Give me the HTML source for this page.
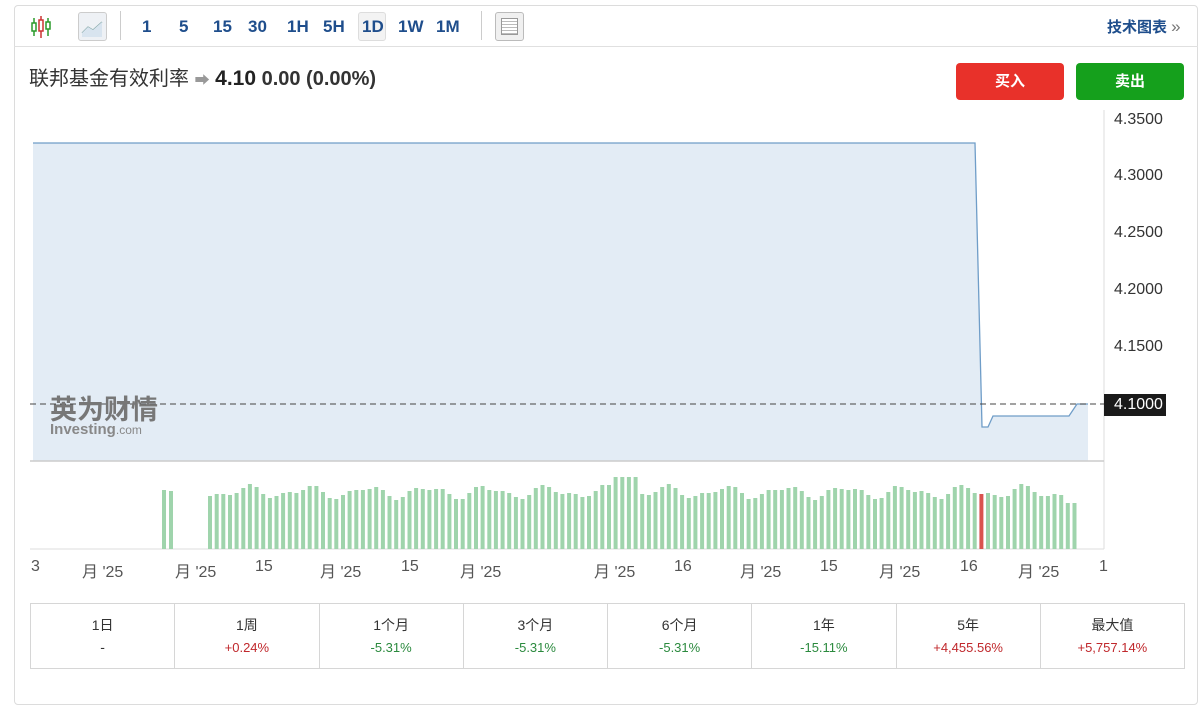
<!DOCTYPE html>
<html><head><meta charset="utf-8"><style>
*{margin:0;padding:0;box-sizing:border-box}
body{width:1200px;height:673px;background:#fff;font-family:"Liberation Sans","Noto Sans CJK SC",sans-serif;position:relative;overflow:hidden}
.box{position:absolute;left:14px;top:5px;width:1184px;height:700px;border:1px solid #dcdcdc;border-radius:4px}
.tb{position:absolute;left:14px;top:5px;width:1184px;height:42px;border-bottom:1px solid #e0e0e0}
.tb span{position:absolute;top:12px;font-size:17px;font-weight:bold;color:#1f4e8c}
.sep{position:absolute;top:12px;width:1px;height:29px;background:#ccc}
.title{position:absolute;left:29px;top:62px;font-size:20px;color:#333}
.btn{position:absolute;top:63px;width:108px;height:37px;border-radius:4px;color:#fff;font-weight:bold;font-size:15px;text-align:center;line-height:37px}
.yl{position:absolute;left:1114px;font-size:16px;color:#333}
.xl{position:absolute;top:558px;font-size:16px;color:#555}
table{position:absolute;left:30px;top:603px;width:1155px;height:66px;border-collapse:collapse}
td{border:1px solid #d6d6d6;text-align:center;font-size:14px;color:#333;line-height:22px;width:144px}
.r{color:#c0282c;font-size:13px}.g{color:#2b8a3e;font-size:13px}
</style></head><body>
<div class="box"></div>
<div class="tb">
<svg style="position:absolute;left:16px;top:9px" width="24" height="26"><g stroke-width="1.5"><line x1="4" y1="4" x2="4" y2="22" stroke="#2a9a2a"/><rect x="2" y="9" width="4" height="8" fill="#fff" stroke="#2a9a2a"/><line x1="11" y1="2" x2="11" y2="24" stroke="#c33"/><rect x="9" y="6" width="4" height="11" fill="#fff" stroke="#c33"/><line x1="18" y1="4" x2="18" y2="22" stroke="#2a9a2a"/><rect x="16" y="8" width="4" height="7" fill="#fff" stroke="#2a9a2a"/></g></svg>
<div style="position:absolute;left:64px;top:7px;width:29px;height:29px;border:1px solid #ccc;border-radius:3px;background:#eef1f5"><svg width="27" height="27"><polyline points="3,20 9,14 14,17 23,9" fill="none" stroke="#8aa" stroke-width="1.2"/><polygon points="3,20 9,14 14,17 23,9 23,24 3,24" fill="#d8e4ef"/></svg></div>
<div class="sep" style="left:106px;top:6px"></div>
<span style="left:128px">1</span><span style="left:165px">5</span><span style="left:199px">15</span><span style="left:234px">30</span><span style="left:273px">1H</span><span style="left:309px">5H</span>
<div style="position:absolute;left:344px;top:7px;width:28px;height:29px;border:1px solid #ddd;border-radius:3px;background:#f3f3f3"></div><span style="left:348px">1D</span>
<span style="left:384px">1W</span><span style="left:422px">1M</span>
<div class="sep" style="left:467px;top:6px"></div>
<div style="position:absolute;left:481px;top:7px;width:29px;height:29px;border:1px solid #bbb;border-radius:3px;background:#f0f0f0"><div style="margin:5px;height:17px;border:1px solid #999;background:repeating-linear-gradient(#fff 0 2px,#bbb 2px 3px)"></div></div>
<span style="left:1093px;top:11px;font-size:15px">技术图表 <span style="position:static;color:#777;font-weight:normal">»</span></span>
</div>
<div class="title">联邦基金有效利率 <span style="color:#999;font-size:15px">➡</span> <b style="color:#222;font-size:21px">4.10</b> <span style="font-weight:bold;color:#333">0.00 (0.00%)</span></div>
<div class="btn" style="left:956px;background:#e8312a">买入</div>
<div class="btn" style="left:1076px;background:#15a01c">卖出</div>
<svg style="position:absolute;left:0;top:0" width="1200" height="600">
<line x1="1104" y1="110" x2="1104" y2="549" stroke="#ddd"/>
<polygon points="33,143 975,143 982,427 988,427 993,416 1069,416 1077,404 1088,404 1088,461 33,461" fill="#e3ecf5"/>
<polyline points="33,143 975,143 982,427 988,427 993,416 1069,416 1077,404 1088,404" fill="none" stroke="#6f9dc8" stroke-width="1.3"/>
<line x1="30" y1="461" x2="1104" y2="461" stroke="#ccc" stroke-width="1.5"/>
<line x1="30" y1="549" x2="1104" y2="549" stroke="#ddd"/>
<line x1="30" y1="404" x2="1104" y2="404" stroke="#444" stroke-dasharray="6,4"/>
<g id="bars" fill="#9fd4ac"></g>
<text x="50" y="419" font-size="27" font-weight="bold" fill="#777" font-family="Noto Sans CJK SC,sans-serif">英为财情</text>
<text x="50" y="434" font-size="15" font-weight="bold" fill="#888">Investing<tspan font-weight="normal" font-size="12">.com</tspan></text>
</svg>
<div style="position:absolute;left:1104px;top:394px;width:62px;height:22px;background:#1a1a1a;color:#fff;font-size:16px;line-height:22px;padding-left:10px">4.1000</div>
<div class="yl" style="top:111px">4.3500</div><div class="yl" style="top:167px">4.3000</div><div class="yl" style="top:224px">4.2500</div><div class="yl" style="top:281px">4.2000</div><div class="yl" style="top:338px">4.1500</div>
<div class="xl" style="left:31px">3</div><div class="xl" style="left:82px">月 '25</div><div class="xl" style="left:175px">月 '25</div><div class="xl" style="left:255px">15</div><div class="xl" style="left:320px">月 '25</div><div class="xl" style="left:401px">15</div><div class="xl" style="left:460px">月 '25</div><div class="xl" style="left:594px">月 '25</div><div class="xl" style="left:674px">16</div><div class="xl" style="left:740px">月 '25</div><div class="xl" style="left:820px">15</div><div class="xl" style="left:879px">月 '25</div><div class="xl" style="left:960px">16</div><div class="xl" style="left:1018px">月 '25</div><div class="xl" style="left:1099px">1</div>
<table><tr><td>1日<br>-</td><td>1周<br><span class="r">+0.24%</span></td><td>1个月<br><span class="g">-5.31%</span></td><td>3个月<br><span class="g">-5.31%</span></td><td>6个月<br><span class="g">-5.31%</span></td><td>1年<br><span class="g">-15.11%</span></td><td>5年<br><span class="r">+4,455.56%</span></td><td>最大值<br><span class="r">+5,757.14%</span></td></tr></table>
<script>
var g=document.getElementById('bars'),s='';
function b(x,t,c){s+='<rect x="'+x.toFixed(1)+'" y="'+t+'" width="4" height="'+(549-t)+'"'+(c?' fill="#d9534f"':'')+'/>';}
b(162,490);b(169,491);
var n=0;for(var x=208;x<1076;x+=6.65){n++;var t=492+Math.round(5*Math.sin(n*0.7)+3*Math.cos(n*1.3));if(x>610&&x<640)t=477;if(x>1060)t=503;b(x,t,Math.abs(x-979)<3.4);}
g.innerHTML=s;
</script>
</body></html>
